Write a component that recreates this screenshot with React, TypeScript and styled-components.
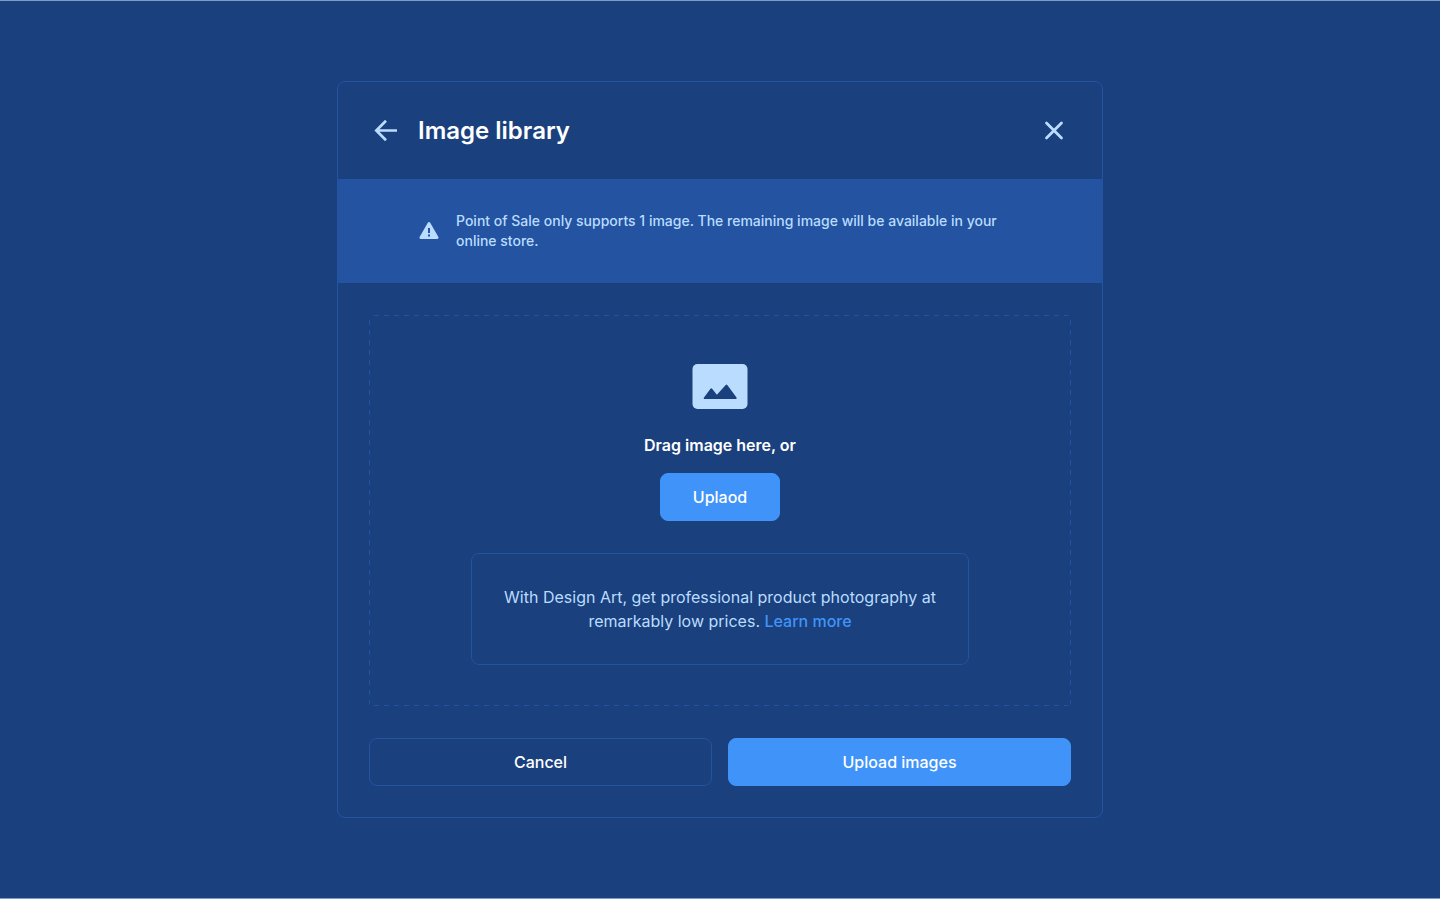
import React from "react";
import styled, { createGlobalStyle } from "styled-components";

const color = {
  page: "#1a407d",
  edge: "#7d9ccb",
  line: "#2353a1",
  accent: "#4094f9",
  soft: "#b9dcff",
  white: "#ffffff",
};

const GlobalStyle = createGlobalStyle`
  *, *::before, *::after { box-sizing: border-box; }
  body {
    margin: 0;
    background: ${color.page};
    font-family: Inter, "Liberation Sans", sans-serif;
    color: ${color.white};
  }
  h1, p { margin: 0; }
`;

const Page = styled.main`
  min-height: 100vh;
  padding: 32px 16px;
  border-top: 1px solid ${color.edge};
  border-bottom: 1px solid ${color.edge};
  display: flex;
  align-items: center;
  justify-content: center;
`;

const Dialog = styled.section`
  width: 100%;
  max-width: 766px;
  border: 1px solid ${color.line};
  border-radius: 8px;
`;

const Header = styled.header`
  display: flex;
  align-items: center;
  gap: 16px;
  padding: 33px 32px 32px;
`;

const Title = styled.h1`
  flex: 1;
  font-size: 24px;
  line-height: 32px;
  font-weight: 600;
`;

const IconButton = styled.button`
  display: flex;
  align-items: center;
  justify-content: center;
  width: 32px;
  height: 32px;
  padding: 0;
  border: 0;
  background: none;
  color: ${color.soft};
  cursor: pointer;
`;

const Banner = styled.div`
  display: flex;
  align-items: center;
  gap: 16px;
  padding: 32px 80px;
  background: ${color.line};
  color: ${color.soft};
`;

const BannerText = styled.p`
  flex: 1;
  font-size: 14px;
  line-height: 20px;
  font-weight: 500;
`;

const Body = styled.div`
  display: flex;
  flex-direction: column;
  gap: 32px;
  padding: 32px 31px 31px;
`;

const dashes = (angle: string) =>
  `repeating-linear-gradient(${angle}, transparent 0 5px, ${color.line} 5px 10px)`;

const DropZone = styled.div`
  display: flex;
  flex-direction: column;
  align-items: center;
  padding: 49px 32px 41px;
  border-radius: 4px;
  background:
    ${dashes("90deg")} top / 100% 1px no-repeat,
    ${dashes("90deg")} bottom / 100% 1px no-repeat,
    ${dashes("180deg")} left / 1px 100% no-repeat,
    ${dashes("180deg")} right / 1px 100% no-repeat;
`;

const DropLabel = styled.p`
  margin: 24px 0 16px;
  font-size: 16px;
  line-height: 24px;
  font-weight: 600;
`;

const Button = styled.button<{ $outline?: boolean }>`
  height: 48px;
  padding: 0 32px;
  border: 1px solid ${(p) => (p.$outline ? color.line : color.accent)};
  border-radius: 8px;
  background: ${(p) => (p.$outline ? "transparent" : color.accent)};
  color: ${color.white};
  font-family: inherit;
  font-size: 16px;
  line-height: 24px;
  font-weight: 500;
  cursor: pointer;
`;

const Promo = styled.p`
  width: 100%;
  max-width: 498px;
  margin-top: 32px;
  padding: 31px;
  border: 1px solid ${color.line};
  border-radius: 8px;
  color: ${color.soft};
  font-size: 16px;
  line-height: 24px;
  text-align: center;
`;

const PromoLink = styled.a`
  color: ${color.accent};
  font-weight: 500;
  text-decoration: none;
`;

const Actions = styled.div`
  display: grid;
  grid-template-columns: 1fr 1fr;
  gap: 16px;
`;

const ArrowLeftIcon = () => (
  <svg width="32" height="32" viewBox="0 0 32 32" fill="none" stroke="currentColor" strokeWidth="2.7" aria-hidden="true">
    <path d="M27 15.500H6.500M16 5.800L6.300 15.500l9.700 9.700" />
  </svg>
);

const CloseIcon = () => (
  <svg width="32" height="32" viewBox="0 0 32 32" fill="none" stroke="currentColor" strokeWidth="2.8" strokeLinecap="round" aria-hidden="true">
    <path d="M8.500 8l15 15M23.500 8l-15 15" />
  </svg>
);

const WarningIcon = () => (
  <svg width="22" height="20" viewBox="0 0 22 20" aria-hidden="true">
    <path fill={color.soft} d="M9.800 1.700c.5-.9 1.900-.9 2.400 0l8.200 14.300c.5.900-.1 2-1.200 2H2.800c-1.100 0-1.700-1.100-1.200-2z" />
    <path fill={color.line} d="M10 7h2v5h-2zM10 13.500h2v2h-2z" />
  </svg>
);

const PictureIcon = () => (
  <svg width="56" height="45" viewBox="0 0 56 45" aria-hidden="true">
    <rect x="0.500" width="55" height="45" rx="5" fill={color.soft} />
    <path fill={color.page} d="M11.800 35v-1.200l6.700-9q.8-.9 1.600 0l4.800 6 8.800-9.800q.8-.8 1.600 0L44.500 33.500V35z" />
  </svg>
);

export default function App() {
  return (
    <>
      <GlobalStyle />
      <Page>
        <Dialog role="dialog" aria-labelledby="dialog-title">
          <Header>
            <IconButton type="button" aria-label="Back">
              <ArrowLeftIcon />
            </IconButton>
            <Title id="dialog-title">Image library</Title>
            <IconButton type="button" aria-label="Close">
              <CloseIcon />
            </IconButton>
          </Header>
          <Banner role="status">
            <WarningIcon />
            <BannerText>
              Point of Sale only supports 1 image. The remaining image will be available in your online store.
            </BannerText>
          </Banner>
          <Body>
            <DropZone>
              <PictureIcon />
              <DropLabel>Drag image here, or</DropLabel>
              <Button type="button">Uplaod</Button>
              <Promo>
                With Design Art, get professional product photography at remarkably low prices.{" "}
                <PromoLink href="#learn-more">Learn more</PromoLink>
              </Promo>
            </DropZone>
            <Actions>
              <Button type="button" $outline>
                Cancel
              </Button>
              <Button type="button">Upload images</Button>
            </Actions>
          </Body>
        </Dialog>
      </Page>
    </>
  );
}
